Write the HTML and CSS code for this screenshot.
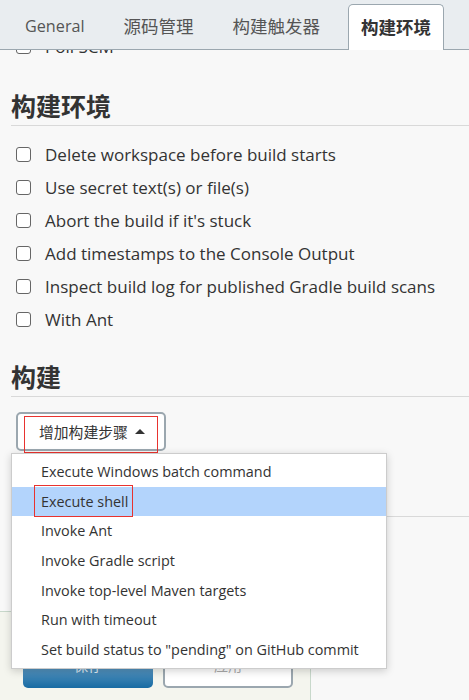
FILE: index.html
```html
<!DOCTYPE html>
<html lang="zh-CN">
<head>
    <meta charset="UTF-8">
    <meta name="viewport" content="width=device-width, initial-scale=1.0">
    <title>构建环境</title>
    <link rel="stylesheet" href="styles.css">
</head>
<body>
    <div class="tabbar">
        <div class="tab latin">General</div>
        <div class="tab">源码管理</div>
        <div class="tab">构建触发器</div>
        <div class="tab active">构建环境</div>
    </div>

    <div class="content">
        <label class="check poll"><span class="box"></span>Poll SCM</label>

        <h2 class="section-title first">构建环境</h2>
        <label class="check"><span class="box"></span>Delete workspace before build starts</label>
        <label class="check"><span class="box"></span>Use secret text(s) or file(s)</label>
        <label class="check"><span class="box"></span>Abort the build if it's stuck</label>
        <label class="check"><span class="box"></span>Add timestamps to the Console Output</label>
        <label class="check"><span class="box"></span>Inspect build log for published Gradle build scans</label>
        <label class="check"><span class="box"></span>With Ant</label>

        <h2 class="section-title">构建</h2>
        <div class="step-wrap">
            <button class="add-step">增加构建步骤 <span class="caret"></span></button>
            <span class="mark mark-button"></span>
            <ul class="menu">
                <li>Execute Windows batch command</li>
                <li class="selected">Execute shell<span class="mark mark-item"></span></li>
                <li>Invoke Ant</li>
                <li>Invoke Gradle script</li>
                <li>Invoke top-level Maven targets</li>
                <li>Run with timeout</li>
                <li>Set build status to "pending" on GitHub commit</li>
            </ul>
        </div>
        <div class="next-section"></div>
    </div>

    <div class="footer">
        <button class="btn primary">保存</button>
        <button class="btn">应用</button>
    </div>
</body>
</html>
```

FILE: styles.css
```css
body {
    margin: 0;
    width: 469px;
    height: 700px;
    overflow: hidden;
    position: relative;
    background-color: #f8f8f8;
    color: #333;
    font-family: "Open Sans", "Noto Sans CJK SC", sans-serif;
}
.tabbar {
    position: relative;
    z-index: 1;
    display: flex;
    align-items: flex-end;
    gap: 13px;
    height: 49px;
    padding-left: 12px;
    background-color: #e9edf0;
    border-bottom: 1px solid #9ba7af;
}
.tab {
    height: 45px;
    line-height: 44px;
    padding: 0 13px;
    font-size: 17.5px;
    color: #555;
}
.tab.latin {
    font-size: 16.2px;
}
.tab.active {
    margin-left: 2px;
    padding: 0 12px;
    margin-bottom: -1px;
    background-color: #fff;
    border: 1px solid #9ba7af;
    border-bottom: none;
    border-radius: 5px 5px 0 0;
    font-weight: bold;
    color: #333;
}
.content {
    padding: 0 0 0 11px;
}
.check {
    display: flex;
    align-items: center;
    height: 33px;
    padding-left: 5px;
    font-size: 17px;
    color: #333;
}
.check.poll {
    margin-top: -20px;
}
.box {
    width: 13px;
    height: 13px;
    margin-right: 14px;
    border: 1px solid #666;
    border-radius: 3px;
    background-color: #fff;
    flex: none;
}
.section-title {
    margin: 24px 0 11px 0;
    padding-bottom: 2px;
    font-size: 25px;
    line-height: 34px;
    font-weight: bold;
    color: #333;
    border-bottom: 1px solid #d9d9d9;
}
.section-title.first {
    margin: 26px 0 12px 0;
}
.step-wrap {
    position: relative;
    margin: 15px 0 0 5px;
    width: 150px;
}
.add-step {
    display: flex;
    align-items: center;
    width: 150px;
    height: 39px;
    padding: 0 0 0 21px;
    background-color: #fff;
    border: 2px solid #9ba7af;
    border-radius: 5px;
    font-family: "Open Sans", "Noto Sans CJK SC", sans-serif;
    font-size: 14.8px;
    color: #333;
}
.caret {
    width: 0;
    height: 0;
    margin-left: 7px;
    border-left: 5px solid transparent;
    border-right: 5px solid transparent;
    border-bottom: 5px solid #333;
}
.mark {
    position: absolute;
    border: 1px solid #e8332f;
    pointer-events: none;
}
.mark-button {
    left: 8px;
    top: 4px;
    width: 132px;
    height: 35px;
}
.menu {
    position: absolute;
    z-index: 2;
    left: -5px;
    top: 41px;
    width: 374px;
    margin: 0;
    padding: 3px 0 3px 0;
    list-style: none;
    background-color: #fff;
    border: 1px solid #ccc;
    box-shadow: 0 2px 8px rgba(0, 0, 0, 0.18);
    font-size: 14.4px;
    color: #333;
}
.menu li {
    position: relative;
    height: 29.7px;
    line-height: 29.7px;
    padding-left: 29px;
}
.menu li.selected {
    background-color: #b3d4fc;
}
.mark-item {
    left: 22px;
    top: -2px;
    width: 97px;
    height: 30px;
}
.next-section {
    margin-top: 65px;
    border-top: 1px solid #d9d9d9;
}
.footer {
    position: absolute;
    left: 0;
    bottom: 0;
    width: 310px;
    height: 88px;
    background-color: #f4f5ee;
    border-top: 1px solid #c8d8cb;
    border-right: 1px solid #c8d8cb;
}
.btn {
    position: absolute;
    top: 36px;
    left: 163px;
    width: 130px;
    height: 40px;
    padding-bottom: 8px;
    background-color: #fff;
    border: 2px solid #9ba7af;
    border-radius: 5px;
    font-family: "Open Sans", "Noto Sans CJK SC", sans-serif;
    font-size: 14px;
    color: #aaa;
}
.btn.primary {
    left: 23px;
    border: none;
    background: linear-gradient(#6fa3c9 30%, #176ba3);
    color: #e0ecf5;
}
```
